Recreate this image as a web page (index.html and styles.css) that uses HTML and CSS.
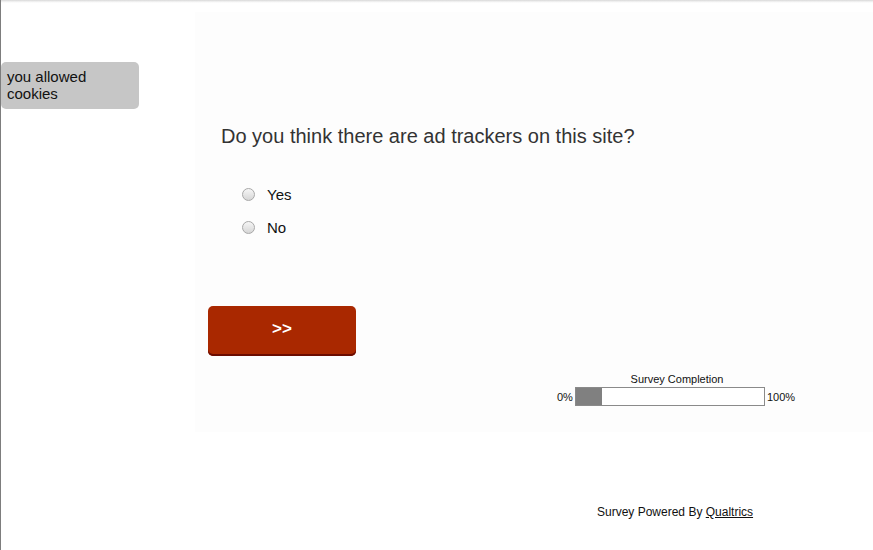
FILE: index.html
```html
<!DOCTYPE html>
<html>
<head>
<meta charset="utf-8">
<link rel="stylesheet" href="styles.css">
</head>
<body>
<div class="page">
  <div class="topshadow"></div>
  <div class="cookie">you allowed cookies</div>
  <div class="survey">
    <h1 class="question">Do you think there are ad trackers on this site?</h1>
    <ul class="choices">
      <li class="choice"><span class="radio"></span><span class="label">Yes</span></li>
      <li class="choice"><span class="radio"></span><span class="label">No</span></li>
    </ul>
    <button class="next">&gt;&gt;</button>
    <div class="progress">
      <div class="progress-title">Survey Completion</div>
      <div class="progress-row">
        <span class="pct">0%</span>
        <div class="bar"><div class="fill" style="width: 26px"></div></div>
        <span class="pct">100%</span>
      </div>
    </div>
  </div>
  <div class="footer">Survey Powered By <a class="brand" href="#">Qualtrics</a></div>
</div>
</body>
</html>
```
FILE: styles.css
```css
html, body {
  margin: 0;
  padding: 0;
  background: #ffffff;
}
body {
  font-family: "Liberation Sans", Arial, Helvetica, sans-serif;
}
.page {
  position: relative;
  height: 550px;
  border-left: 1px solid #7d7d7d;
  box-sizing: border-box;
  display: flex;
  flex-direction: column;
  overflow: hidden;
}
.topshadow {
  height: 3px;
  background: linear-gradient(#d8d8d8, #f4f4f4 60%, #ffffff);
  flex: none;
}
.cookie {
  position: absolute;
  left: 0;
  top: 62px;
  width: 138px;
  height: 47px;
  box-sizing: border-box;
  padding: 6px 40px 0 6px;
  background: #c6c6c6;
  border-radius: 5px;
  font-size: 15px;
  line-height: 17px;
  color: #111;
}
.survey {
  margin: 9px 0 0 194px;
  height: 420px;
  background: #fdfdfd;
  display: flex;
  flex-direction: column;
  align-items: flex-start;
  flex: none;
}
.question {
  margin: 112px 0 0 26px;
  font-size: 20px;
  font-weight: normal;
  line-height: 24px;
  color: #333333;
}
.choices {
  list-style: none;
  margin: 30px 0 0 47px;
  padding: 0;
}
.choice {
  display: flex;
  align-items: center;
  height: 33px;
}
.radio {
  width: 13px;
  height: 13px;
  box-sizing: border-box;
  border-radius: 50%;
  border: 1px solid #a8a8a8;
  background: linear-gradient(#f6f6f6, #d6d6d6);
  margin-right: 12px;
}
.label {
  font-size: 15px;
  color: #111;
}
.next {
  margin: 62px 0 0 13px;
  width: 148px;
  height: 50px;
  border: none;
  border-radius: 5px;
  background: #a92800;
  box-shadow: inset 0 -2px 0 #6b0c00;
  color: #ffffff;
  font-family: "Liberation Sans", Arial, sans-serif;
  font-weight: bold;
  font-size: 17px;
  padding: 0 0 4px 0;
}
.progress {
  margin: 16px 0 0 362px;
  display: flex;
  flex-direction: column;
  align-items: center;
  font-size: 11px;
  color: #111;
}
.progress-title {
  line-height: 14px;
  margin-left: 2px;
}
.progress-row {
  display: flex;
  align-items: center;
  gap: 2px;
  margin-top: 1px;
}
.bar {
  width: 190px;
  height: 19px;
  box-sizing: border-box;
  border: 1px solid #8a8a8a;
  background: #ffffff;
}
.fill {
  height: 100%;
  background: #808080;
}
.footer {
  margin: 73px 0 0 596px;
  font-size: 12px;
  line-height: 14px;
  color: #111;
}
.brand {
  color: #111;
  text-decoration: underline;
}
```
